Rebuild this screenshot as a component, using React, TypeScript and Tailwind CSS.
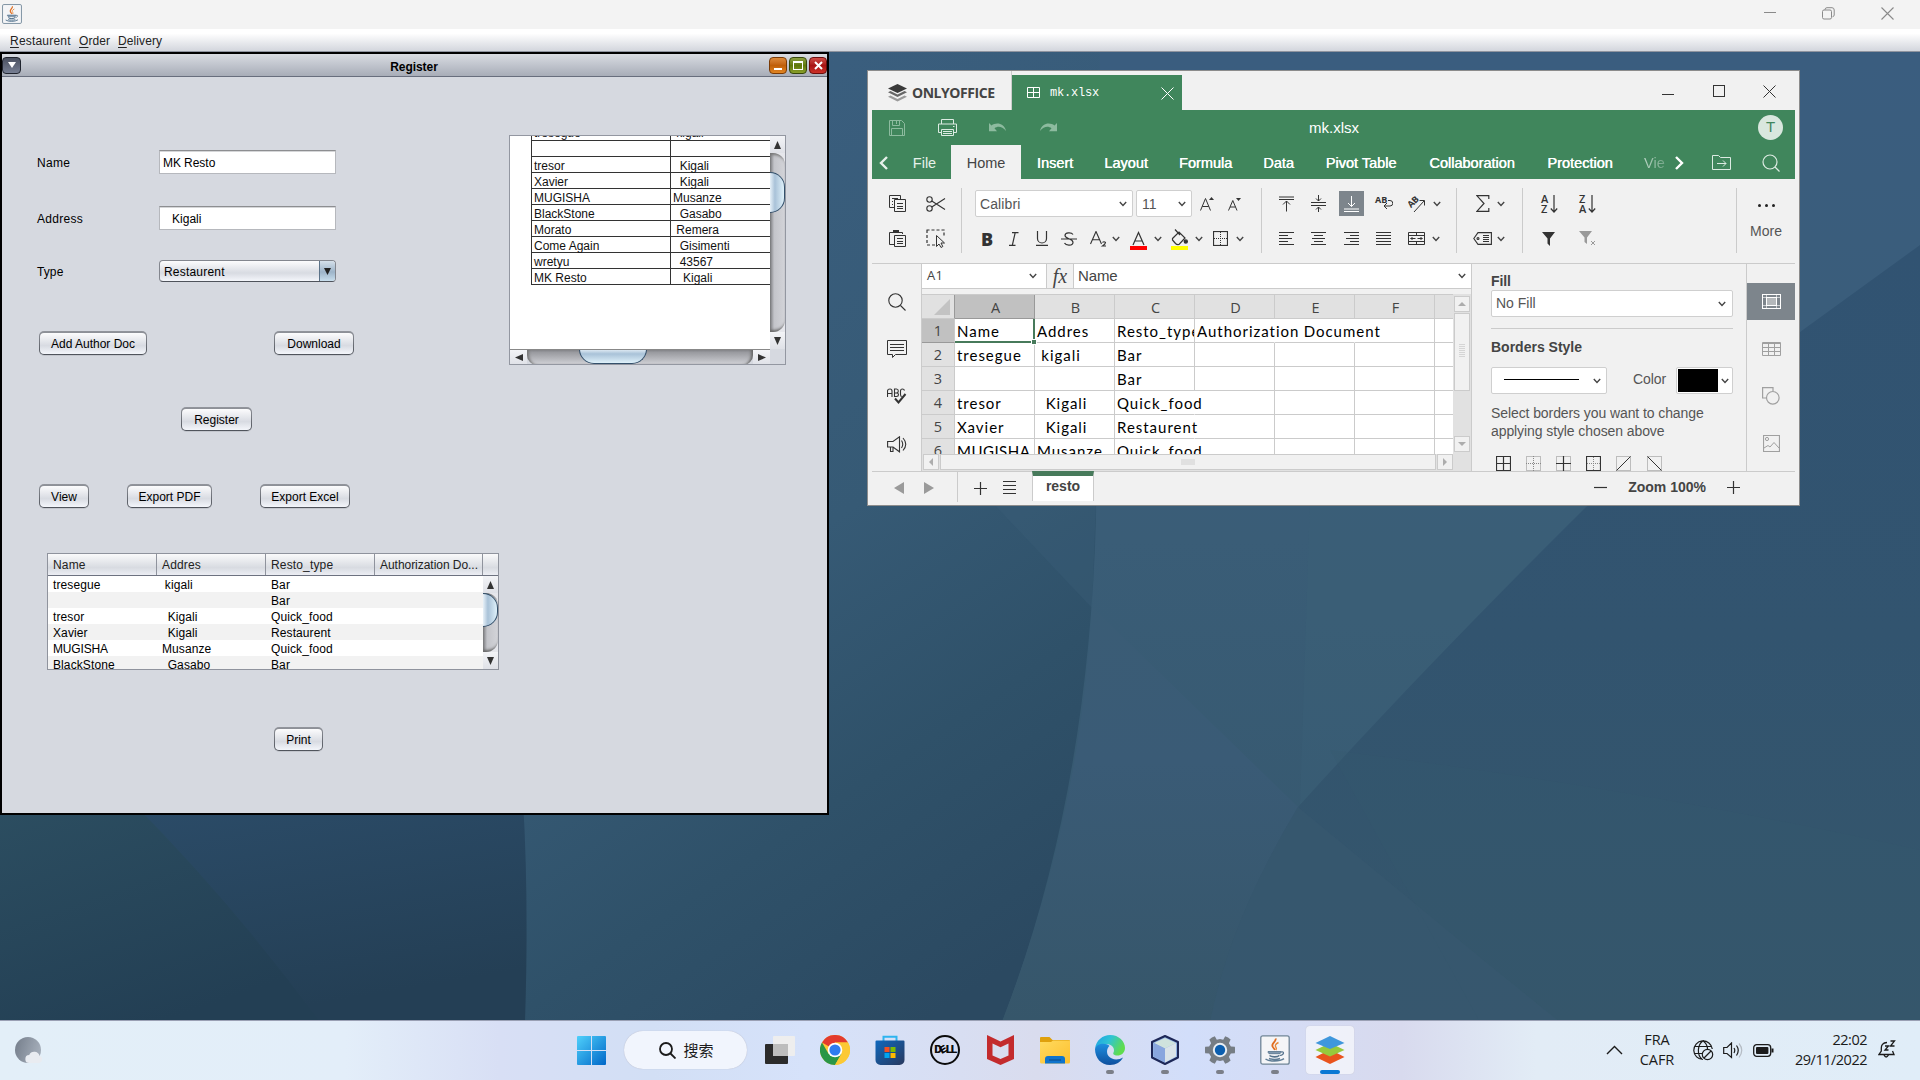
import React from "react";

type Kids = { children?: React.ReactNode };

/* ---------- small helpers ---------- */

function Ico({ w, h, className = "", children, color = "#333", sw = 1 }: Kids & { w: number; h: number; className?: string; color?: string; sw?: number }) {
  return (
    <svg width={w} height={h} viewBox={`0 0 ${w} ${h}`} fill="none" stroke={color} strokeWidth={sw} className={`block shrink-0 ${className}`}>
      {children}
    </svg>
  );
}

function Chev({ className = "" }: { className?: string }) {
  return (
    <Ico w={8} h={6} className={className} color="#444" sw={1.4}>
      <path d="M0.8 1 L4 4.4 L7.2 1" />
    </Ico>
  );
}

/* ---------- wallpaper ---------- */

function Wallpaper() {
  return (
    <svg className="absolute inset-0" width="1920" height="1080" viewBox="0 0 1920 1080">
      <defs>
        <linearGradient id="wBase" x1="0" y1="0" x2="0" y2="1">
          <stop offset="0" stopColor="#3a5d80" />
          <stop offset="0.5" stopColor="#3a5d77" />
          <stop offset="1" stopColor="#34566b" />
        </linearGradient>
        <linearGradient id="wMid" x1="0.3" y1="0" x2="0.7" y2="1">
          <stop offset="0" stopColor="#3b5f80" />
          <stop offset="0.5" stopColor="#365a75" />
          <stop offset="0.75" stopColor="#2f5169" />
          <stop offset="1" stopColor="#2b4961" />
        </linearGradient>
        <linearGradient id="wDark" x1="0" y1="0" x2="0.4" y2="1">
          <stop offset="0" stopColor="#2c4d6a" />
          <stop offset="1" stopColor="#243f55" />
        </linearGradient>
        <linearGradient id="wTeal" x1="0" y1="0" x2="0.5" y2="1">
          <stop offset="0" stopColor="#2c4e61" />
          <stop offset="1" stopColor="#233f54" />
        </linearGradient>
        <linearGradient id="wRight" x1="0" y1="0" x2="0" y2="1">
          <stop offset="0" stopColor="#315372" />
          <stop offset="0.5" stopColor="#32546f" />
          <stop offset="1" stopColor="#35566b" />
        </linearGradient>
        <linearGradient id="wStrip" x1="0" y1="0" x2="0" y2="1">
          <stop offset="0" stopColor="#3a5d75" />
          <stop offset="0.5" stopColor="#3a5b76" />
          <stop offset="1" stopColor="#36566a" />
        </linearGradient>
      </defs>
      <rect width="1920" height="1080" fill="url(#wBase)" />
      <path d="M828 50 H1100 L1096 520 Q1088 800 1002 1022 H520 V800 H828 Z" fill="url(#wMid)" />
      <path d="M990 500 H1096 L1092 608 Z" fill="#3b5f78" opacity="0.35" />
      <path d="M1094 500 L1092 608 Q1080 820 1002 1022 H1560 L1482 959 L1298 807 L1092 607 Z" fill="url(#wStrip)" />
      <path d="M1310 500 H1590 L1420 800 L1300 804 Z" fill="#3b6078" opacity="0.35" />
      <path d="M1920 245 L1800 332 L1585 508 Q1420 672 1298 807 Q1230 920 1210 1022 H1920 Z" fill="url(#wRight)" />
      <path d="M1298 807 Q1230 920 1210 1022 H1560 L1482 959 Z" fill="#38586f" opacity="0.6" />
      <path d="M1330 750 Q1650 790 1920 850 V1022 H1480 Z" fill="#37586d" opacity="0.2" />
      <path d="M0 800 H523 Q529 900 525 1022 H0 Z" fill="url(#wDark)" />
      <path d="M0 800 H130 Q230 900 320 1022 H0 Z" fill="url(#wTeal)" />
    </svg>
  );
}

/* ---------- Java desktop ---------- */

function JavaCup({ size, className = "" }: { size: number; className?: string }) {
  return (
    <svg width={size} height={size} viewBox="0 0 30 30" className={`block shrink-0 ${className}`} fill="none">
      <rect x="0.8" y="0.8" width="28.4" height="28.4" rx="2" fill="#f4f5f7" stroke="#6f8597" strokeWidth="1.3" />
      <path d="M15.5 3.5c1.5 2.8-4.5 4.500-3 8 .5 1.200 2 2.300 2.500 3.500" stroke="#e06c1f" strokeWidth="1.8" />
      <path d="M18.500 7.500c-3 1.500-4 3-2.600 4.800.8 1 .6 1.800 0 2.700" stroke="#e88a3a" strokeWidth="1.400" />
      <path d="M8 16.500h13c0 1-.5 1.800-1 2.200h-11c-.6-.4-1-1.200-1-2.200Z" fill="#7d97ad" stroke="#54728c" strokeWidth=".8" />
      <path d="M9.500 20.500c2 1.600 8 1.600 10 0M10 20.500c1 2 8 2 9 0" stroke="#54728c" strokeWidth="1.300" />
      <path d="M21 17c3.500-.8 3.500 2.500-1 3.500" stroke="#54728c" strokeWidth="1.200" />
      <path d="M5.500 24c4 2.800 14 2.800 18.500-.3M9 23.500c3 1 8 1 11 0" stroke="#5f7d96" strokeWidth="1.500" />
    </svg>
  );
}

function MainTitleBar() {
  return (
    <div className="flex h-[29px] items-start justify-between bg-[#f3f3f3]">
      <JavaCup size={20} className="ml-[2px] mt-[4px]" />
      <div className="flex h-[26px] items-center pr-[26px]">
        <Ico w={12} h={12} color="#8a8a8a"><path d="M0 5.500h12" /></Ico>
        <Ico w={13} h={13} color="#8a8a8a" className="ml-[46px]">
          <rect x="0.500" y="3" width="9" height="9" rx="1.500" />
          <path d="M3 3V2.500A2 2 0 0 1 5 .7H10A2.300 2.300 0 0 1 12.200 3V8A2 2 0 0 1 10.500 9.800" />
        </Ico>
        <Ico w={13} h={13} color="#8a8a8a" sw={1.100} className="ml-[46px]"><path d="M.5.5l12 12M12.500.5l-12 12" /></Ico>
      </div>
    </div>
  );
}

function MenuBar() {
  return (
    <div className="flex h-[23px] items-center border-b border-[#8f949f] bg-linear-to-b from-white from-20% to-[#d3d6dd] pl-[10px] pt-[1px] text-[12px] text-[#222]">
      <span className="w-[69px] tracking-[0.2px]"><u className="underline-offset-2">R</u>estaurent</span>
      <span className="w-[39px] tracking-[0.1px]"><u className="underline-offset-2">O</u>rder</span>
      <span className="tracking-[0.1px]"><u className="underline-offset-2">D</u>elivery</span>
    </div>
  );
}

function JButton({ label, className }: { label: string; className: string }) {
  return (
    <button className={`block h-[24px] shrink-0 rounded-[5px] bg-linear-to-b from-[#92959c] to-[#4f535b] p-[1px] shadow-[0_1px_0_#c3c6cd] ${className}`}>
      <span className="flex h-[21px] items-center justify-center whitespace-pre rounded-[4px] bg-linear-to-b from-[#fcfcfd] via-[#d8dbe2] via-60% to-[#f4f6fb] pt-[2px] text-[12px] text-black">
        {label}
      </span>
    </button>
  );
}

function Field({ value }: { value: string }) {
  return (
    <div className="flex h-[24px] w-[177px] items-center whitespace-pre border border-[#b6b8bd] border-t-[#8d8e91] bg-white pl-[3px] pt-[1px] text-[12px] text-black shadow-[inset_0_1px_0_#d5d6d8] [word-spacing:-0.3px]">
      {value}
    </div>
  );
}

function ArrowBtn({ dir, className }: { dir: "up" | "down" | "left" | "right"; className: string }) {
  const pts = { up: "0,8 3.500,0 7,8", down: "0,0 7,0 3.500,8", left: "8,0 8,7 0,3.500", right: "0,0 8,3.500 0,7" }[dir];
  return (
    <div className={`flex shrink-0 items-center justify-center bg-linear-to-b from-[#f3f4f7] to-[#dfe1e7] ${className}`}>
      <svg width={8} height={8} viewBox="0 0 8 8"><polygon points={pts} fill="#333" /></svg>
    </div>
  );
}

function VBar({ thumb, gap }: { thumb: string; gap: string }) {
  return (
    <div className="flex w-[15px] shrink-0 flex-col overflow-hidden bg-[#e6e7ec]">
      <ArrowBtn dir="up" className="h-[17px] w-[15px]" />
      <div className="flex min-h-0 flex-1 flex-col rounded-r-[12px] bg-linear-to-r from-[#8f9095] via-[#c4c5ca] via-30% to-[#d3d4d9] shadow-[inset_1px_3px_3px_-1px_#777,inset_1px_-3px_3px_-1px_#666]">
        <div className={`w-[15px] shrink-0 rounded-r-[15px] border-[1.500px] border-l-0 border-[#34506b] bg-linear-to-r from-[#e8f1f8] via-[#a9c2d8] via-35% to-[#dff1fa] ${gap} ${thumb}`} />
      </div>
      <ArrowBtn dir="down" className="h-[17px] w-[15px]" />
    </div>
  );
}

const printed: [string, string][] = [
  ["tresor", "  Kigali"],
  ["Xavier", "  Kigali"],
  ["MUGISHA", "Musanze"],
  ["BlackStone", "  Gasabo"],
  ["Morato", " Remera"],
  ["Come Again", "  Gisimenti"],
  ["wretyu", "  43567"],
  ["MK Resto", "   Kigali"],
];

function PrintPane() {
  return (
    <div className="mt-[58px] flex h-[230px] w-[277px] flex-col border border-[#9397a1] bg-[#d6d9e0]">
      <div className="flex h-[213px]">
        <div className="h-[213px] w-[260px] overflow-hidden bg-white pl-[21px] text-[12px] leading-[16px] text-[#111]">
          <div className="-mt-[12px] w-[260px] border-b border-l border-[#333]">
            {[["tresegue", " kigali"], ["", ""], ...printed].map(([a, b], i) => (
              <div key={i} className={i === 0 ? "flex h-[16px]" : "flex h-[16px] border-t border-[#333]"}>
                <div className="w-[139px] whitespace-pre border-r border-[#333] pl-[2px] pt-[1px] leading-[16px]">{a}</div>
                <div className="whitespace-pre pl-[2px] pt-[1px] leading-[16px]">{b}</div>
              </div>
            ))}
          </div>
        </div>
        <VBar gap="mt-[19px]" thumb="h-[41px]" />
      </div>
      <div className="flex h-[15px] w-[260px] overflow-hidden border-t border-[#888]">
        <ArrowBtn dir="left" className="h-[15px] w-[17px]" />
        <div className="flex h-[15px] flex-1 rounded-b-[10px] bg-linear-to-b from-[#8f9095] to-[#d3d4d9] shadow-[inset_3px_0_3px_-1px_#777,inset_-3px_0_3px_-1px_#666]">
          <div className="-mt-px ml-[52px] h-[15px] w-[68px] rounded-b-[15px] border-[1.500px] border-t-0 border-[#34506b] bg-linear-to-b from-[#e8f1f8] via-[#a9c2d8] via-35% to-[#dff1fa]" />
        </div>
        <ArrowBtn dir="right" className="h-[15px] w-[17px]" />
      </div>
    </div>
  );
}

const rows: [string, string, string][] = [
  ["tresegue", " kigali", "Bar"],
  ["", "", "Bar"],
  ["tresor", "  Kigali", "Quick_food"],
  ["Xavier", "  Kigali", "Restaurent"],
  ["MUGISHA", "Musanze", "Quick_food"],
  ["BlackStone", "  Gasabo", "Bar"],
];

function JTable() {
  return (
    <div className="ml-[45px] mt-[45px] flex h-[117px] w-[452px] flex-col border border-[#8f939d] bg-white text-[12px] text-black">
      <div className="flex h-[22px] border-b border-[#6d7280] bg-linear-to-b from-[#fafafb] via-[#d8dbe1] via-65% to-[#eceef4] text-[#222]">
        {["Name", "Addres", "Resto_type"].map((h) => (
          <div key={h} className="w-[109px] border-r border-[#8f939d] pl-[5px] pt-[2px] leading-[18px] tracking-[0.15px]">{h}</div>
        ))}
        <div className="w-[108px] whitespace-nowrap border-r border-[#8f939d] pl-[5px] pt-[2px] leading-[18px] tracking-[-0.04px]">Authorization Do...</div>
      </div>
      <div className="flex h-[93px]">
        <div className="w-[435px] overflow-hidden tracking-[0.1px] [word-spacing:-0.6px]">
          {rows.map((r, i) => (
            <div key={i} className={i % 2 ? "flex h-[16px] bg-[#f2f2f2] leading-[18px]" : "flex h-[16px] leading-[18px]"}>
              {r.map((c, j) => (
                <div key={j} className={`w-[109px] whitespace-pre pl-[5px] ${c === "MUGISHA" ? "tracking-[-0.15px]" : ""}`}>{c}</div>
              ))}
            </div>
          ))}
        </div>
        <VBar gap="mt-0" thumb="h-[34px]" />
      </div>
    </div>
  );
}

function RegisterFrame() {
  return (
    <div className="flex h-[763px] w-[829px] flex-col border-2 border-black bg-[#d6d9e0]">
      <div className="flex h-[23px] items-center border-b border-[#686e7d] bg-linear-to-b from-[#d9dce2] to-[#a8adb8]">
        <div className="flex h-[17px] w-[19px] items-center justify-center rounded-[4px] border border-[#20242e] bg-linear-to-b from-[#4a5060] to-[#777f93]">
          <svg width={8} height={6}><polygon points="0,0 8,0 4,6" fill="#fff" /></svg>
        </div>
        <div className="flex-1 pl-[38px] pt-[3px] text-center text-[12px] font-bold tracking-[-0.05px] text-black">Register</div>
        <div className="flex gap-[2px]">
          <div className="flex h-[17px] w-[18px] items-center justify-center rounded-[4px] border border-[#7a3a05] bg-linear-to-b from-[#dc8a3a] via-[#c05f08] to-[#e08522]">
            <div className="mt-[7px] h-[2px] w-[8px] bg-white" />
          </div>
          <div className="flex h-[17px] w-[18px] items-center justify-center rounded-[4px] border border-[#36470a] bg-linear-to-b from-[#8ba040] via-[#5f7808] to-[#8a9f2a]">
            <div className="h-[9px] w-[10px] border border-t-2 border-white" />
          </div>
          <div className="flex h-[17px] w-[18px] items-center justify-center rounded-[4px] border border-[#6a0c0c] bg-linear-to-b from-[#d04a45] via-[#a81414] to-[#cc3028]">
            <Ico w={9} h={9} color="#fff" sw={2}><path d="M1 1l7 7M8 1l-7 7" /></Ico>
          </div>
        </div>
      </div>
      <div className="flex flex-1">
        <div className="flex w-[507px] flex-col text-[12px] text-black">
          <div className="mt-[73px] flex h-[24px] items-center">
            <span className="ml-[35px] w-[122px] pt-[2px] tracking-[0.3px]">Name</span>
            <Field value="MK Resto" />
          </div>
          <div className="mt-[32px] flex h-[24px] items-center">
            <span className="ml-[35px] w-[122px] pt-[2px] tracking-[0.3px]">Address</span>
            <Field value="   Kigali" />
          </div>
          <div className="mt-[30px] flex h-[22px] items-center">
            <span className="ml-[35px] w-[122px] pt-[2px] tracking-[0.1px]">Type</span>
            <div className="flex h-[22px] w-[177px] overflow-hidden rounded-[4px] border border-[#83868e] border-b-[#4f535b] bg-linear-to-b from-[#fcfcfd] via-[#d8dbe2] via-60% to-[#f4f6fb]">
              <span className="flex-1 pl-[4px] pt-[2px] leading-[19px] tracking-[0.2px]">Restaurent</span>
              <div className="flex w-[16px] items-center justify-center border-l border-[#5b7288] bg-linear-to-b from-[#d5e0ea] via-[#9db4c9] via-55% to-[#c9dfee]">
                <svg width={7} height={7}><polygon points="0,0 7,0 3.5,7" fill="#222" /></svg>
              </div>
            </div>
          </div>
          <div className="mt-[49px] flex">
            <JButton label="Add Author Doc" className="ml-[37px] w-[108px]" />
            <JButton label="Download" className="ml-[127px] w-[80px]" />
          </div>
          <JButton label="Register" className="ml-[179px] mt-[52px] w-[71px]" />
          <div className="mt-[53px] flex">
            <JButton label="View" className="ml-[37px] w-[50px]" />
            <JButton label="Export PDF" className="ml-[38px] w-[85px]" />
            <JButton label="Export Excel" className="ml-[48px] w-[90px]" />
          </div>
          <JTable />
          <JButton label="Print" className="ml-[272px] mt-[57px] w-[49px]" />
        </div>
        <PrintPane />
      </div>
    </div>
  );
}

/* ---------- ONLYOFFICE ---------- */

const tabs: [string, string][] = [
  ["File", "w-[53px]"],
  ["Home", "w-[70px]"],
  ["Insert", "w-[68px]"],
  ["Layout", "w-[74px]"],
  ["Formula", "w-[85px]"],
  ["Data", "w-[61px]"],
  ["Pivot Table", "w-[104px]"],
  ["Collaboration", "w-[118px]"],
  ["Protection", "w-[98px]"],
];

function OOHeader() {
  return (
    <>
      <div className="flex h-[39px] items-start">
        <div className="flex h-[39px] w-[144px] items-center border-r border-[#ccc] pl-[20px] pt-[4px]">
          <svg width={19} height={18} viewBox="0 0 19 18">
            <path d="M9.500 0L19 4.500L9.500 9L0 4.500Z" fill="#3a3a3a" />
            <path d="M0 8.300L2.500 7.100L9.500 10.400L16.500 7.100L19 8.300L9.500 13Z" fill="#666" />
            <path d="M0 12.800L2.500 11.600L9.500 14.900L16.500 11.600L19 12.800L9.500 17.600Z" fill="#9a9a9a" />
          </svg>
          <span className="ml-[5px] font-['Open_Sans'] text-[14px] font-bold tracking-[-0.45px] text-[#444]">ONLYOFFICE</span>
        </div>
        <div className="mt-[4px] flex h-[35px] w-[170px] items-center bg-[#40865c]">
          <Ico w={13} h={11} color="#fff" className="ml-[15px]"><path d="M.5.5h12v10H.5ZM.5 5.500h12M6.500.5v10" /></Ico>
          <span className="ml-[10px] flex-1 pt-[1px] font-['Liberation_Mono'] text-[12px] tracking-[-0.2px] text-white">mk.xlsx</span>
          <Ico w={13} h={13} color="#fff" className="mr-[8px] mt-[1px]"><path d="M.5.5l12 12M12.500.5l-12 12" /></Ico>
        </div>
        <div className="flex h-[39px] flex-1 items-center justify-end pr-[23px] pt-[1px]">
          <Ico w={12} h={12} color="#333"><path d="M0 9.500h12" /></Ico>
          <Ico w={12} h={12} color="#333" className="ml-[39px]"><rect x=".5" y=".5" width="11" height="11" /></Ico>
          <Ico w={13} h={13} color="#333" className="ml-[38px]"><path d="M.5.5l12 12M12.500.5l-12 12" /></Ico>
        </div>
      </div>
      <div className="mx-[4px] flex h-[69px] flex-col bg-[#40865c] text-white">
        <div className="flex h-[35px] items-center">
          <div className="flex w-[156px] flex-1 items-center">
            <Ico w={16} h={16} color="#8dbb9f" className="ml-[17px]">
              <path d="M.5.500h12l3 3v12H.5ZM3.500.5v5h7v-5M7.500 1v3M2.500 15.500v-7h11v7" />
            </Ico>
            <Ico w={19} h={17} color="#dcebe2" className="ml-[33px]">
              <path d="M3.500 5V.5h12V5M3.500 13.500H.5V5h18v8.500h-3M3.500 10.500h12v6h-12ZM5 12.500h9M5 14.500h9M15 7.500h1.500" />
            </Ico>
            <svg width={17} height={9} viewBox="0 0 17 9" className="ml-[32px]"><path d="M0 0L2.500 2.500C7-.8 15-.3 17 8C13 3 8.500 3 5.500 5.300L8 8.300H0Z" fill="#8dbb9f" /></svg>
            <svg width={17} height={9} viewBox="0 0 17 9" className="ml-[34px]"><path d="M17 0L14.500 2.500C10-.8 2-.3 0 8C4 3 8.500 3 11.500 5.300L9 8.300H17Z" fill="#8dbb9f" /></svg>
          </div>
          <span className="pl-[13px] pt-[2px] text-[15px] text-white">mk.xlsx</span>
          <div className="flex flex-1 justify-end pr-[12px]">
            <div className="flex h-[25px] w-[25px] items-center justify-center rounded-full bg-[#d9e7de] text-[15px] text-[#40865c]">T</div>
          </div>
        </div>
        <div className="flex h-[34px] items-center text-[14.500px] font-medium">
          <Ico w={10} h={14} color="#e6f1ea" sw={2.400} className="ml-[7px] mr-[9px] mt-[1px]"><path d="M8 1L2 7L8 13" /></Ico>
          {tabs.map(([t, w]) => (
            <div key={t} className={`flex h-[34px] shrink-0 items-center justify-center whitespace-nowrap pt-[3px] ${w} ${t === "Home" ? "bg-[#f1f1f1] text-[#444]" : t === "File" ? "text-[#e6f1ea]" : "text-white [text-shadow:0.4px_0_0_#fff]"}`}>
              {t}
            </div>
          ))}
          <span className="ml-[15px] w-[22px] bg-linear-to-r from-[#b9d5c5] to-[#6fa384] bg-clip-text pt-[3px] text-transparent">Vie</span>
          <Ico w={10} h={14} color="#fff" sw={2.400} className="ml-[8px] mt-[1px]"><path d="M2 1L8 7L2 13" /></Ico>
          <Ico w={19} h={15} color="#dcebe2" className="ml-[28px] mt-[1px]"><path d="M.5 14.500V.5h6l2 2h10v12ZM5 8.500h9M11 5.500l3 3l-3 3" /></Ico>
          <Ico w={18} h={18} color="#dcebe2" className="ml-[31px] mt-[1px]" sw={1.200}><circle cx="8" cy="8" r="7" /><path d="M13 13l4.500 4.500" /></Ico>
        </div>
      </div>
    </>
  );
}

const Sep = () => <div className="mt-[9px] h-[65px] w-px shrink-0 bg-[#cbcbcb]" />;

function Group({ w, top, bottom }: { w: string; top: React.ReactNode; bottom: React.ReactNode }) {
  return (
    <div className={`flex shrink-0 flex-col gap-[4px] pt-[9px] ${w}`}>
      <div className="flex h-[31px] items-center">{top}</div>
      <div className="flex h-[31px] items-center">{bottom}</div>
    </div>
  );
}

const LetterA = "M.5 13L6 .5L11.500 13M2.500 8.800h7";

function Ribbon() {
  return (
    <div className="mx-[4px] flex h-[85px] border-b border-[#cbcbcb]">
      <Group
        w="w-[89px]"
        top={
          <>
            <Ico w={17} h={17} className="ml-[17px]">
              <path d="M5 12.500H.5V.5h11V4M3 3.500h6M3 6.500h1M3 9.500h1" />
              <path d="M5.500 4.500h11v12h-11ZM8 8.500h6M8 11.500h6M8 13.500h6" />
            </Ico>
            <Ico w={20} h={16} className="ml-[20px]" sw={1.100}>
              <circle cx="3.500" cy="3.500" r="2.700" /><circle cx="3.500" cy="12.500" r="2.700" />
              <path d="M5.800 5L19 13.500M5.800 11L19 2.500" />
            </Ico>
          </>
        }
        bottom={
          <>
            <Ico w={17} h={17} className="ml-[17px]">
              <path d="M5 14.500H.5V2.500h13V4" /><rect x="4" y="0" width="6" height="3" fill="#333" stroke="none" />
              <path d="M5.500 5.500h11v11h-11ZM8 8.500h6M8 11.500h6M8 13.500h6" />
            </Ico>
            <Ico w={20} h={19} className="ml-[20px]">
              <path d="M.5 1h17.500v6M1 1v15h8" strokeDasharray="3 2" strokeWidth="1.200" />
              <path d="M10.500 6.500v11l2.500-2.500l2 3.500l1.800-1l-1.800-3.500h3.500Z" fill="#f1f1f1" />
            </Ico>
          </>
        }
      />
      <Sep />
      <Group
        w="w-[299px]"
        top={
          <>
            <div className="ml-[13px] flex h-[27px] w-[158px] items-center justify-between rounded-[2px] border border-[#cfcfcf] bg-white pl-[4px] pr-[5px] text-[14px] text-[#555]">
              <span className="pt-[1px] tracking-[0.1px]">Calibri</span><Chev className="mt-[1px]" />
            </div>
            <div className="ml-[3px] flex h-[27px] w-[56px] items-center justify-between rounded-[2px] border border-[#cfcfcf] bg-white pl-[5px] pr-[5px] text-[14px] text-[#555]">
              <span className="pt-[1px]">11</span><Chev className="mt-[1px]" />
            </div>
            <Ico w={14} h={15} className="ml-[8px]">
              <path d="M.5 14.500L5.500 2.500L10.500 14.500M2.300 10.500h6.500" /><polygon points="9,4 11.500,1 14,4" fill="#333" stroke="none" />
            </Ico>
            <Ico w={14} h={15} className="ml-[14px]">
              <path d="M.5 14.500L4.800 4.500L9 14.500M2 11h5.500" /><polygon points="8,2 13,2 10.500,5" fill="#333" stroke="none" />
            </Ico>
          </>
        }
        bottom={
          <>
            <span className="ml-[19px] w-[12px] text-center font-['Open_Sans'] text-[18px] font-extrabold leading-none text-[#333]">B</span>
            <Ico w={10} h={14} className="ml-[16px]" sw={1.200}><path d="M3 .7h6.500M0 13.300h6.500M6.200.7L3.300 13.300" /></Ico>
            <Ico w={12} h={15} className="ml-[17px]" sw={1.200}><path d="M1.500 0v7.500a4.500 4.500 0 0 0 9 0V0M0 14.300h12" /></Ico>
            <Ico w={16} h={14} className="ml-[13px]" sw={1.200}><path d="M12 2.500C10.500.2 4 .2 4 3.500C4 7 12 6.500 12 10.200C12 14 5 14 3.500 11M0 7h16" /></Ico>
            <Ico w={17} h={16} className="ml-[13px]" sw={1.100}><path d={LetterA} /><path d="M12.500 11.500q1.500-1.500 3 0q0 1.500-3 3.500h3.500" /></Ico>
            <Chev className="ml-[5px]" />
            <Ico w={17} h={19} className="ml-[10px] mt-[3px]" sw={1.200}><path d="M3 14L8.500 1.500L14 14M5 10h7" /><rect x="0" y="15" width="17" height="4" fill="#f00" stroke="none" /></Ico>
            <Chev className="ml-[7px]" />
            <Ico w={17} h={21} className="ml-[9px] mt-[1px]" sw={1.200}>
              <path d="M1.500 9.500L8 3L14 9L8 15.500Q6 16 4.500 14.500L1.500 11ZM4 .5L9 6" /><circle cx="14.800" cy="12.500" r="1.600" fill="#333" />
              <rect x="0" y="17" width="17" height="4" fill="#ff0" stroke="none" />
            </Ico>
            <Chev className="ml-[7px]" />
            <Ico w={15} h={15} className="ml-[10px]"><rect x=".5" y=".5" width="14" height="14" strokeWidth="1.200" /><path d="M7.500 1v13M1 7.500h13" strokeDasharray="1 1" /></Ico>
            <Chev className="ml-[8px]" />
          </>
        }
      />
      <Sep />
      <Group
        w="w-[194px]"
        top={
          <>
            <Ico w={15} h={16} className="ml-[17px]"><path d="M0 1h15M0 3.500h15M7.500 15.500V5M4 8.500l3.500-3.500l3.500 3.500" /></Ico>
            <Ico w={15} h={17} className="ml-[17px]"><path d="M0 7.500h15M0 10.500h15M7.500 0v6M5 3.500l2.500 2.500l2.500-2.500M7.500 17v-5M5 14.500l2.500-2.500l2.500 2.500" /></Ico>
            <div className="ml-[13px] flex h-[25px] w-[25px] items-end justify-center bg-[#7d858c] pb-[4px]">
              <Ico w={15} h={16} color="#fff"><path d="M0 13h15M0 15.500h15M7.500 0v10.500M4 7l3.500 3.500l3.500-3.500" /></Ico>
            </div>
            <div className="ml-[11px] flex w-[19px] items-start">
              <span className="w-[12px] shrink-0 font-['Open_Sans'] text-[9px] font-bold leading-[8px] text-[#333]">AB</span>
              <Ico w={10} h={12} className="-ml-[4px] mt-[3px]"><path d="M5 1.500h2a2.500 2.500 0 0 1 0 5.500H1M4 4L1 7l3 3" /></Ico>
            </div>
            <Ico w={17} h={18} className="ml-[14px]"><path d="M6 17L16 6M11.500 5.500H16.500V10.500" /><text x="-1" y="10" fontSize="9" fontWeight="700" fontFamily="Open Sans" fill="#333" stroke="none" transform="rotate(-45 5 7)">AB</text></Ico>
            <Chev className="ml-[8px]" />
          </>
        }
        bottom={
          <>
            <Ico w={15} h={13} className="ml-[17px]"><path d="M0 .5h15M0 3.500h9M0 6.500h13M0 9.500h9M0 12.500h15" /></Ico>
            <Ico w={15} h={13} className="ml-[17px]"><path d="M0 .5h15M3 3.500h9M1 6.500h13M3 9.500h9M0 12.500h15" /></Ico>
            <Ico w={15} h={13} className="ml-[18px]"><path d="M0 .5h15M6 3.500h9M2 6.500h13M6 9.500h9M0 12.500h15" /></Ico>
            <Ico w={15} h={13} className="ml-[17px]"><path d="M0 .5h15M0 3.500h15M0 6.500h15M0 9.500h15M0 12.500h15" /></Ico>
            <Ico w={17} h={13} className="ml-[17px]"><path d="M.5.5h16v12H.5ZM.5 3.500h16M.5 9.500h16M8.500.5v3M8.500 9.500v3M2.500 6.500h5M9.500 6.500h5M4.500 5L3 6.500L4.500 8M12.500 5L14 6.500L12.500 8" /></Ico>
            <Chev className="ml-[7px]" />
          </>
        }
      />
      <Sep />
      <Group
        w="w-[65px]"
        top={
          <>
            <Ico w={14} h={17} className="ml-[19px]" sw={1.200}><path d="M12.800 4V.6H.8L8 8.500L.8 16.400H12.800V13" /></Ico>
            <Chev className="ml-[7px]" />
          </>
        }
        bottom={
          <>
            <Ico w={19} h={13} className="ml-[16px]" sw={1.100}><path d="M.8 6.500L5 .6H18.400V12.400H5ZM10 3.500h6M10 5.500h6M10 7.500h6M10 9.500h6" /><circle cx="5" cy="6.500" r="1" /></Ico>
            <Chev className="ml-[5px]" />
          </>
        }
      />
      <Sep />
      <Group
        w="w-[213px]"
        top={
          <>
            <Sort a="A" b="Z" className="ml-[18px]" />
            <Sort a="Z" b="A" className="ml-[21px]" />
          </>
        }
        bottom={
          <>
            <Ico w={14} h={14} className="ml-[19px]"><path d="M0 0h13L8 6.500V14L5.500 11.500V6.500Z" fill="#333" stroke="none" /></Ico>
            <Ico w={17} h={15} className="ml-[23px]"><path d="M0 0h13L8 6.500V13L5.500 11V6.500Z" fill="#999" stroke="none" /><path d="M12 10l4 4M16 10l-4 4" stroke="#999" /></Ico>
          </>
        }
      />
      <Sep />
      <div className="flex w-[58px] flex-col items-center pt-[25px] text-[14px] text-[#555]">
        <Ico w={17} h={3}><circle cx="1.500" cy="1.500" r="1.500" fill="#222" stroke="none" /><circle cx="8.500" cy="1.500" r="1.500" fill="#222" stroke="none" /><circle cx="15.500" cy="1.500" r="1.500" fill="#222" stroke="none" /></Ico>
        <span className="mt-[14px]">More</span>
      </div>
    </div>
  );
}

function Sort({ a, b, className }: { a: string; b: string; className: string }) {
  return (
    <div className={`flex w-[17px] shrink-0 ${className}`}>
      <div className="w-[8px] font-['Open_Sans'] text-[11px] font-semibold leading-[10px] text-[#333]"><div>{a}</div><div>{b}</div></div>
      <Ico w={8} h={18} className="ml-[1px] mt-px" sw={1.200}><path d="M4 0v17M.8 13.500L4 17l3.200-3.500" /></Ico>
    </div>
  );
}

const sheet: string[][] = [
  ["Name", "Addres", "Resto_type", "Authorization Document", "", "", ""],
  ["tresegue", " kigali", "Bar", "", "", "", ""],
  ["", "", "Bar", "", "", "", ""],
  ["tresor", "  Kigali", "Quick_food", "", "", "", ""],
  ["Xavier", "  Kigali", "Restaurent", "", "", "", ""],
  ["MUGISHA", "Musanze", "Quick_food", "", "", "", ""],
];

function cellBorder(r: number, c: number) {
  const open = (r === 0 && (c === 3 || c === 4)) || (r >= 3 && c === 2);
  return open ? "border-r-transparent" : "border-r-[#cbcbcb]";
}

function Sheet() {
  return (
    <div className="flex h-[160px] w-[531px] flex-col overflow-hidden border-t border-[#cbcbcb] bg-white">
      <div className="flex h-[24px] shrink-0 font-['Open_Sans'] text-[14.500px] text-[#444]">
        <div className="flex w-[33px] shrink-0 items-end justify-end border-b border-r border-[#cbcbcb] border-r-[#999] bg-[#e1e1e1] pb-[3px] pr-[4px]">
          <svg width={16} height={16}><polygon points="16,0 16,16 0,16" fill="#c3c3c3" /></svg>
        </div>
        {["A", "B", "C", "D", "E", "F", ""].map((c, i) => (
          <div key={i} className={i === 0 ? "w-[80px] shrink-0 border-b border-r border-[#999] bg-[#c1c1c1] pl-[2px] pt-[2px] text-center leading-[22px]" : "w-[80px] shrink-0 border-b border-r border-[#cbcbcb] bg-[#e1e1e1] pl-[2px] pt-[2px] text-center leading-[22px]"}>{c}</div>
        ))}
      </div>
      {sheet.map((r, i) => (
        <div key={i} className="flex h-[24px] shrink-0">
          <div className={`w-[33px] shrink-0 border-b border-r border-[#cbcbcb] text-center font-['Open_Sans'] text-[14.500px] leading-[24px] text-[#444] ${i === 0 ? "border-b-[#999] bg-[#c1c1c1]" : "bg-[#e1e1e1]"}`}>{i + 1}</div>
          {r.map((c, j) => (
            <div key={j} className={`relative h-[24px] w-[80px] shrink-0 whitespace-pre border-b border-r border-b-[#cbcbcb] pl-[2px] pt-[1px] font-['Lato'] text-[15px] leading-[22px] text-black [word-spacing:-0.5px] ${c === "MUGISHA" ? "tracking-[0.5px]" : "tracking-[0.98px]"} ${cellBorder(i, j)} ${i === 0 && j === 2 ? "overflow-hidden" : ""}`}>
              {c}
              {i === 0 && j === 0 && (
                <>
                  <div className="absolute -bottom-px left-0 h-[2px] w-[79px] bg-[#477a5b]" />
                  <div className="absolute -right-px top-0 h-[21px] w-[2px] bg-[#477a5b]" />
                  <div className="absolute -bottom-[3px] -right-[3px] z-10 h-[6px] w-[6px] border border-white bg-[#477a5b]" />
                </>
              )}
            </div>
          ))}
        </div>
      ))}
    </div>
  );
}

function ScrollArrow({ pts, className = "" }: { pts: string; className?: string }) {
  return (
    <div className={`flex h-[16px] w-[16px] shrink-0 items-center justify-center border border-[#cbcbcb] bg-[#f1f1f1] ${className}`}>
      <svg width={8} height={8}><polygon points={pts} fill="#adadad" /></svg>
    </div>
  );
}

function LeftRail() {
  return (
    <div className="flex w-[50px] shrink-0 flex-col items-center border-r border-[#cbcbcb]">
      <Ico w={18} h={18} className="mt-[29px]" sw={1.100}><circle cx="7.500" cy="7.500" r="6.700" /><path d="M12.500 12.500l5 5" /></Ico>
      <Ico w={20} h={19} className="mt-[29px]"><path d="M.5.5h19v14H8.500L5.500 17.500V14.500H.5ZM3 4.500h14M3 7.500h14M3 10.500h14" /></Ico>
      <Ico w={20} h={17} className="mt-[29px]">
        <path d="M.5 9V3Q.5 1 3 1Q5 1 5 3V9M.5 5.500H5M7.500 1v7.500h2Q11.500 8.500 11.500 6.800Q11.500 5 9.500 5Q11.300 5 11.300 3Q11.300 1 9.500 1ZM7.500 5h2M17.500 2.500Q17 1 15.500 1Q13.500 1 13.500 3V6.500Q13.500 8.500 14.800 8.500" strokeWidth="1.100" />
        <path d="M8 10.500l3.500 4L18.500 6" strokeWidth="2" />
      </Ico>
      <Ico w={20} h={17} className="mt-[31px]" sw={1.100}><path d="M.6 5.500H6L12.500.8V15.800L6 11H.6ZM3.500 11v4.500h2.500V11M14.500 4.500Q17 8.200 14.500 12M16 2Q21.500 8.200 16 14.500" /></Ico>
    </div>
  );
}

function RightRail() {
  return (
    <div className="flex w-[49px] shrink-0 flex-col items-center border-l border-[#cbcbcb]">
      <div className="mt-[19px] flex h-[37px] w-[48px] items-center justify-center bg-[#7d858c]">
        <Ico w={19} h={15} color="#fff"><path d="M.5.5h18v14H.5ZM.5 3.500h18M.5 11.500h18M4.500.5v14M14.500.5v14" opacity=".6" /><rect x=".5" y=".5" width="18" height="14" /><rect x="4.500" y="3.500" width="10" height="8" fill="#b4b8bb" /></Ico>
      </div>
      <Ico w={19} h={14} color="#a0a0a0" className="mt-[22px]"><path d="M.5.5h18v13H.5ZM.5 1.500h18M.5 5.500h18M.5 9.500h18M6.500.5v13M12.500.5v13" /></Ico>
      <Ico w={18} h={18} color="#a0a0a0" className="mt-[31px]" sw={1.200}><path d="M4 11H.6V.6H11V4" /><circle cx="10.800" cy="10.800" r="6.300" /></Ico>
      <Ico w={17} h={17} color="#a0a0a0" className="mt-[30px]"><path d="M.5.5h16v16H.5Z" strokeWidth="1.200" /><circle cx="4" cy="4" r="1.600" /><path d="M1 13L5 10.500L7 12L11 7.500L16 13" /></Ico>
    </div>
  );
}

function FormatPanel() {
  return (
    <div className="flex h-[207px] w-[274px] shrink-0 flex-col overflow-hidden pl-[19px] pt-[9px] text-[14px] text-[#444]">
      <div className="h-[18px] font-bold leading-[17px] tracking-[-0.1px]">Fill</div>
      <div className="flex h-[27px] w-[242px] shrink-0 items-center justify-between rounded-[2px] border border-[#cfcfcf] bg-white pl-[4px] pr-[6px] text-[#555]">No Fill<Chev className="mt-[1px]" /></div>
      <div className="mt-[11px] h-px w-[242px] shrink-0 bg-[#cbcbcb]" />
      <div className="mt-[9px] h-[18px] font-bold leading-[18px]">Borders Style</div>
      <div className="mt-[11px] flex h-[27px] w-[242px] shrink-0 items-center justify-between text-[#555]">
        <div className="flex h-[27px] w-[116px] items-center justify-between rounded-[2px] border border-[#cfcfcf] bg-white pl-[12px] pr-[5px]">
          <div className="-mt-[2px] h-px w-[75px] bg-black" /><Chev className="mt-[1px]" />
        </div>
        <div className="flex items-center">
          <span className="-mt-[2px] mr-[10px] tracking-[-0.1px]">Color</span>
          <div className="flex h-[27px] w-[57px] items-center gap-[3px] rounded-[2px] border border-[#cfcfcf] bg-white pl-[1px]">
            <div className="h-[23px] w-[40px] bg-black" /><Chev />
          </div>
        </div>
      </div>
      <div className="mt-[10px] h-[36px] shrink-0 whitespace-nowrap leading-[18px] tracking-[-0.09px] text-[#555]">Select borders you want to change<br />applying style chosen above</div>
      <div className="ml-[5px] mt-[16px] flex shrink-0 gap-[15px]">
        <Ico w={15} h={15} color="#333"><path d="M.5.5h14v14H.5ZM7.500 0v15M0 7.500h15" strokeWidth="1.200" /></Ico>
        <Ico w={15} h={15} color="#888"><path d="M.5.5h14v14H.5ZM7.500 0v15M0 7.500h15" strokeDasharray="1 1" /></Ico>
        <Ico w={15} h={15} color="#333"><path d="M.5.5h14v14H.5Z" strokeDasharray="1 1" stroke="#888" /><path d="M7.500 0v15M0 7.500h15" strokeWidth="1.200" /></Ico>
        <Ico w={15} h={15} color="#333"><path d="M.5.5h14v14H.5Z" strokeWidth="1.200" /><path d="M7.500 1v13M1 7.500h13" strokeDasharray="1 1" stroke="#888" /></Ico>
        <Ico w={15} h={15} color="#333"><path d="M.5.5h14v14H.5Z" strokeDasharray="1 1" stroke="#888" /><path d="M.5 14.500L14.500.5" /></Ico>
        <Ico w={15} h={15} color="#333" className="ml-[1px]"><path d="M.5.5h14v14H.5Z" strokeDasharray="1 1" stroke="#888" /><path d="M.5.5L14.500 14.500" /></Ico>
      </div>
    </div>
  );
}

function OnlyOffice() {
  return (
    <div className="flex h-[436px] w-[933px] flex-col border border-[#8c8c8c] bg-[#f1f1f1]">
      <OOHeader />
      <Ribbon />
      <div className="mx-[4px] flex h-[207px]">
        <LeftRail />
        <div className="flex w-[550px] shrink-0 flex-col border-r border-[#cbcbcb]">
          <div className="flex h-[25px] shrink-0 border-b border-[#cbcbcb] bg-white">
            <div className="flex w-[124px] items-center justify-between pl-[5px] pr-[9px] font-['Open_Sans'] text-[13px] tracking-[0.4px] text-[#444]">A1<Chev /></div>
            <div className="flex w-[28px] items-center justify-center border-x border-[#cbcbcb] bg-[#f1f1f1] font-['Liberation_Serif'] text-[20px] italic leading-none text-[#444]">fx</div>
            <div className="flex flex-1 items-center justify-between pl-[4px] pr-[5px] text-[15px] tracking-[-0.1px] text-[#444]">Name<Chev /></div>
          </div>
          <div className="mt-[5px] flex h-[160px] shrink-0 bg-[#e1e1e1]">
            <Sheet />
            <div className="ml-[1px] flex w-[16px] flex-col pb-[2px] pt-[2px]">
              <ScrollArrow pts="0,6 4,2 8,6" />
              <div className="mt-px flex h-[78px] flex-col items-center border border-[#cbcbcb] bg-[#f1f1f1] pt-[30px]">
                <div className="h-[14px] w-[6px] bg-[repeating-linear-gradient(#d5d5d5_0_1px,#f1f1f1_1px_2px)]" />
              </div>
              <ScrollArrow pts="0,2 8,2 4,6" className="mt-auto" />
            </div>
          </div>
          <div className="flex h-[17px] shrink-0 bg-[#e1e1e1] pl-[1px]">
            <ScrollArrow pts="6,0 6,8 2,4" />
            <div className="ml-[1px] flex h-[16px] w-[496px] items-center justify-center border border-[#cbcbcb] bg-[#f1f1f1]"><div className="h-[6px] w-[14px] bg-[#e0e0e0]" /></div>
            <ScrollArrow pts="2,0 6,4 2,8" className="ml-[1px]" />
          </div>
        </div>
        <FormatPanel />
        <RightRail />
      </div>
      <div className="mx-[4px] flex h-[34px] border-t border-[#cbcbcb]">
        <div className="flex h-[30px] w-[86px] items-center border-r border-[#cbcbcb] pt-[2px]">
          <svg width={10} height={12} className="ml-[22px]"><polygon points="10,0 10,12 0,6" fill="#9a9a9a" /></svg>
          <svg width={10} height={12} className="ml-[20px]"><polygon points="0,0 10,6 0,12" fill="#9a9a9a" /></svg>
        </div>
        <div className="flex h-[30px] items-center pt-[2px]">
          <Ico w={13} h={13} className="ml-[16px]"><path d="M6.500 0v13M0 6.500h13" strokeWidth="1.200" /></Ico>
          <Ico w={13} h={14} className="ml-[16px]"><path d="M0 .5h13M0 4.500h13M0 8.500h13M0 12.500h13" /></Ico>
        </div>
        <div className="-mt-px ml-[16px] h-[30px] w-[62px] border-x border-t-[5px] border-x-[#cbcbcb] border-t-[#477a5b] bg-white text-center text-[14px] font-bold leading-[21px] text-[#444]">resto</div>
        <div className="flex h-[30px] flex-1 items-center justify-end pr-[55px] pt-[1px] text-[14px] font-bold text-[#444]">
          <Ico w={13} h={13}><path d="M0 6.500h13" strokeWidth="1.200" /></Ico>
          <span className="mx-[21px]">Zoom 100%</span>
          <Ico w={13} h={13}><path d="M6.500 0v13M0 6.500h13" strokeWidth="1.200" /></Ico>
        </div>
      </div>
    </div>
  );
}

/* ---------- taskbar ---------- */

function Slot({ children, dot, active }: Kids & { dot?: boolean; active?: boolean }) {
  return (
    <div className={`mx-[3.500px] flex h-[48px] w-[48px] flex-col items-center rounded-[4px] ${active ? "bg-white/60 shadow-[0_0_1px_#bbb]" : ""}`}>
      <div className="mt-[9px] flex h-[30px] w-[30px] items-center justify-center">{children}</div>
      {dot && <div className="mt-[5px] h-[4px] w-[8px] rounded-full bg-[#7b7f88]" />}
      {active && <div className="mt-[5px] h-[4px] w-[20px] rounded-full bg-[#0a78d4]" />}
    </div>
  );
}

function StartIcon() {
  return (
    <svg width={29} height={29} viewBox="0 0 29 29">
      <defs><linearGradient id="st" x1="0" y1="0" x2="1" y2="1"><stop offset="0" stopColor="#4fd0fb" /><stop offset="1" stopColor="#0067c8" /></linearGradient></defs>
      <path fill="url(#st)" d="M0 1a1 1 0 0 1 1-1h13v14H0ZM15 0h13a1 1 0 0 1 1 1v13H15ZM0 15h14v14H1a1 1 0 0 1-1-1ZM15 15h14v13a1 1 0 0 1-1 1H15Z" />
    </svg>
  );
}

function Taskbar() {
  return (
    <div className="flex h-[60px] items-start border-t border-[#9aa0b4] bg-[linear-gradient(90deg,#e3eff8_0%,#e3eef9_18%,#d8dff5_26%,#d2dff5_34%,#d6e2fa_42%,#d9dcee_54%,#d2defa_62%,#d8daee_73%,#e2ecf6_80%,#e0edf8_100%)] font-['Open_Sans'] text-[#1b1b1b]">
      <div className="w-[564px] pl-[14px] pt-[15px]">
        <svg width={30} height={30} viewBox="0 0 30 30">
          <defs><linearGradient id="mo" x1="0" y1="0" x2="1" y2="0.3"><stop offset="0" stopColor="#747d8a" /><stop offset="1" stopColor="#a3acb8" /></linearGradient></defs>
          <circle cx="14" cy="14" r="13" fill="url(#mo)" />
          <path d="M15.500 27a4 4 0 0 1-.3-8a5.500 5.500 0 0 1 10.300.8a3.700 3.700 0 0 1-.5 7.200Z" fill="#e9ecf1" />
        </svg>
      </div>
      <div className="flex w-[54px] justify-center pt-[15px]"><StartIcon /></div>
      <div className="ml-[6px] mt-[10px] flex h-[38px] w-[123px] items-center justify-center rounded-full bg-[#f1f5fd] shadow-[0_0_1px_#aab]">
        <Ico w={17} h={17} color="#1b1b1b" sw={1.800} className="ml-[2px]"><circle cx="7" cy="7" r="6" /><path d="M11.500 11.500l5 5" /></Ico>
        <span className="-mt-[2px] ml-[7px] font-['Noto_Sans_CJK_SC',sans-serif] text-[15px] leading-none">搜索</span>
      </div>
      <div className="ml-[5.500px] mt-[5px] flex">
        <Slot>
          <svg width={30} height={30} viewBox="0 0 30 30"><rect x="0" y="9" width="23" height="20" rx="1" fill="#2b2b2b" /><rect x="8" y="1" width="22" height="20" rx="1" fill="#eee" /><rect x="8" y="9" width="15" height="12" fill="#bdbdbd" /></svg>
        </Slot>
        <Slot>
          <svg width={30} height={30} viewBox="0 0 30 30">
            <circle cx="15" cy="15" r="15" fill="#fcc934" />
            <path d="M15 15L2 7.500A15 15 0 0 1 28 7.500H15Z" fill="#e33b2e" />
            <path d="M2 7.500A15 15 0 0 0 15 30L21.500 18.700H8.500Z" fill="#2a9647" />
            <path d="M15 7.500H28A15 15 0 0 1 15 30L21.500 18.700Z" fill="#fcc934" />
            <circle cx="15" cy="15" r="7.300" fill="#fff" /><circle cx="15" cy="15" r="5.600" fill="#2f7cf0" />
          </svg>
        </Slot>
        <Slot>
          <svg width={30} height={30} viewBox="0 0 30 30">
            <defs><linearGradient id="ms" x1="0" y1="0" x2="1" y2="1"><stop offset="0" stopColor="#0f68bd" /><stop offset="1" stopColor="#28385e" /></linearGradient></defs>
            <path d="M8.500 6V1.800h13V6" fill="none" stroke="#2fb4ef" strokeWidth="2" />
            <path d="M.5 6.500a1 1 0 0 1 1-1h27a1 1 0 0 1 1 1V25a5 5 0 0 1-5 5h-19a5 5 0 0 1-5-5Z" fill="url(#ms)" />
            <path d="M9.500 12h5v5h-5Z" fill="#f25022" /><path d="M15.500 12h5v5h-5Z" fill="#7fba00" /><path d="M9.500 18h5v5h-5Z" fill="#00a4ef" /><path d="M15.500 18h5v5h-5Z" fill="#ffb900" />
          </svg>
        </Slot>
        <Slot>
          <div className="flex h-[30px] w-[30px] items-center justify-center rounded-full border-2 border-[#0b0b0b] font-['Liberation_Sans'] text-[10px] font-bold leading-none tracking-[-1.200px] text-[#0b0b0b] [text-shadow:0.4px_0_0_#0b0b0b]">
            D<span className="inline-block -rotate-[30deg]">E</span>LL
          </div>
        </Slot>
        <Slot>
          <svg width={27} height={30} viewBox="0 0 27 30"><path d="M0 0L13.500 6.500L27 0V24L13.500 30L0 24ZM5.500 8.500V20.500L13.500 24L21.500 20.500V8.500L13.500 12.300Z" fill="#c32b2d" fillRule="evenodd" /></svg>
        </Slot>
        <Slot>
          <svg width={30} height={30} viewBox="0 0 30 30">
            <defs><linearGradient id="fo" x1="0" y1="0" x2="1" y2="1"><stop offset="0" stopColor="#ffda5e" /><stop offset="1" stopColor="#fdc02f" /></linearGradient></defs>
            <path d="M0 3a1 1 0 0 1 1-1h8.500l3 3H29a1 1 0 0 1 1 1v6H0Z" fill="#dfa00c" /><path d="M0 7h11l2-1.500h17V27a1.500 1.500 0 0 1-1.500 1.500h-27A1.500 1.500 0 0 1 0 27Z" fill="url(#fo)" />
            <path d="M5 28.500V24a3 3 0 0 1 3-3h14a3 3 0 0 1 3 3v4.500Z" fill="#0f74cc" /><path d="M9 25h12" stroke="#0b4f92" strokeWidth="1.200" />
          </svg>
        </Slot>
        <Slot dot>
          <svg width={30} height={30} viewBox="0 0 30 30">
            <defs>
              <linearGradient id="ed1" x1="0" y1="0" x2="1" y2=".4"><stop offset="0" stopColor="#1c9fe6" /><stop offset=".5" stopColor="#2fc3d4" /><stop offset="1" stopColor="#5fdc4e" /></linearGradient>
              <linearGradient id="ed2" x1="0" y1="0" x2="0" y2="1"><stop offset="0" stopColor="#1d8fe0" /><stop offset="1" stopColor="#0e4f9e" /></linearGradient>
            </defs>
            <path d="M0 14C1 5 8 0 15 0C24 0 30 6.500 30 13C30 18 26 20.500 22.500 20.500C18.500 20.500 17.800 18.700 18.500 17.500C20 15 18.500 9.500 12 9C6 8.500 1 11 0 14Z" fill="url(#ed1)" />
            <path d="M0 14C0 23 6 30 15 30C21 30 26 27 28 22.500C24 25 17 25.500 13.500 21C11 17.500 12 13 14.500 11C12 7.800 1.500 7.500 0 14Z" fill="url(#ed2)" />
          </svg>
        </Slot>
        <Slot dot>
          <svg width={30} height={30} viewBox="0 0 30 30">
            <path d="M15 1L28 7V22.500L15 29L2 22.500V7Z" fill="#8fb0e2" stroke="#1d2757" strokeWidth="2" strokeLinejoin="round" />
            <path d="M15 3L26 8L15 13.500L4 8Z" fill="#cfe3dd" /><path d="M15 13.500L26 8V21.500L15 27.500Z" fill="#d9e3e8" /><path d="M15 13.500L4 8V21.500L15 27.500Z" fill="#88a6de" />
          </svg>
        </Slot>
        <Slot dot>
          <svg width={30} height={30} viewBox="0 0 30 30">
            <path d="M11.800 4.700L15 4L18.200 4.700L20.200 1.300A14.500 14.500 0 0 1 25.600 4.600L23.900 8.200L25.900 11.400L29.800 11.800A14.800 14.800 0 0 1 29.800 18.200L25.900 18.600L23.900 21.800L25.600 25.400A14.500 14.500 0 0 1 20.200 28.700L18.200 25.300L15 26L11.800 25.300L9.800 28.700A14.500 14.500 0 0 1 4.400 25.400L6.100 21.800L4.100 18.600L.2 18.200A14.800 14.800 0 0 1 .2 11.800L4.100 11.400L6.100 8.200L4.400 4.600A14.500 14.500 0 0 1 9.800 1.300Z" fill="#767d84" />
            <circle cx="15" cy="15" r="7.200" fill="#e8edf2" /><circle cx="15" cy="15" r="5.200" fill="#0c5eae" />
          </svg>
        </Slot>
        <Slot dot><JavaCup size={30} /></Slot>
        <Slot active>
          <svg width={30} height={30} viewBox="0 0 30 30"><path d="M15 14.500L29.500 22L15 29L.5 22Z" fill="#e9531d" /><path d="M15 8L29.500 15L15 21.500L.5 15Z" fill="#97c93c" /><path d="M15 1L29.500 8L15 14L.5 8Z" fill="#3f97dc" /></svg>
        </Slot>
      </div>
      <div className="flex flex-1 items-start justify-end pr-[24px]">
        <Ico w={17} h={10} color="#1b1b1b" sw={1.400} className="mt-[24px]"><path d="M1 9L8.500 1.500L16 9" /></Ico>
        <div className="ml-[14px] mt-[9px] w-[40px] text-center text-[14.500px] leading-[20px] tracking-[-0.1px]">FRA<br />CAFR</div>
        <Ico w={21} h={21} color="#1b1b1b" sw={1.200} className="ml-[16px] mt-[19px]">
          <path d="M10 19.500A9.300 9.300 0 1 1 19.300 9M10 .7C4 5 4 15 9 19.300M10 .7C13 3 14.500 6 14.500 9M1.500 6.500H18.500M1.500 13.500H9" />
          <circle cx="14.500" cy="14.500" r="5.200" /><path d="M11 18L18 11" />
        </Ico>
        <Ico w={20} h={17} color="#1b1b1b" sw={1.200} className="ml-[9px] mt-[21px]">
          <path d="M.7 5.500H4L8.500 1V15.500L4 11.500H.7ZM11 6Q12.500 8.200 11 11M13.500 3.500Q17 8.200 13.500 13.500" /><path d="M16 1.500Q21.500 8.200 16 15.500" stroke="#b5bcc4" />
        </Ico>
        <Ico w={21} h={13} color="#1b1b1b" sw={1.300} className="ml-[10px] mt-[23px]">
          <rect x=".7" y=".7" width="17" height="11.600" rx="3" /><rect x="3" y="3" width="12.400" height="7" rx="1" fill="#1b1b1b" stroke="none" /><path d="M19.500 4.500v4" strokeWidth="2" />
        </Ico>
        <div className="ml-[13px] mt-[9px] w-[80px] whitespace-nowrap text-right text-[14.500px] leading-[20px] tracking-[-0.5px]">22:02<br />29/11/2022</div>
        <Ico w={18} h={19} color="#1b1b1b" sw={1.300} className="ml-[11px] mt-[19px]">
          <path d="M9 2.500C4.500 2.500 3.300 5.500 3.300 8V11L1 14.500H16L14.500 11M6 15Q8 19 10.500 15" />
          <path d="M7 6h3.500L7 10h3.500M12.500 1H16.500L12.500 6H16.500" />
        </Ico>
      </div>
    </div>
  );
}

export default function App() {
  return (
    <div className="relative flex h-[1080px] w-[1920px] flex-col overflow-hidden font-['Liberation_Sans',sans-serif]">
      <Wallpaper />
      <div className="relative flex flex-1 flex-col">
        <MainTitleBar />
        <MenuBar />
        <div className="flex flex-1 items-start">
          <RegisterFrame />
          <div className="ml-[38px] mt-[18px]"><OnlyOffice /></div>
        </div>
        <Taskbar />
      </div>
    </div>
  );
}
